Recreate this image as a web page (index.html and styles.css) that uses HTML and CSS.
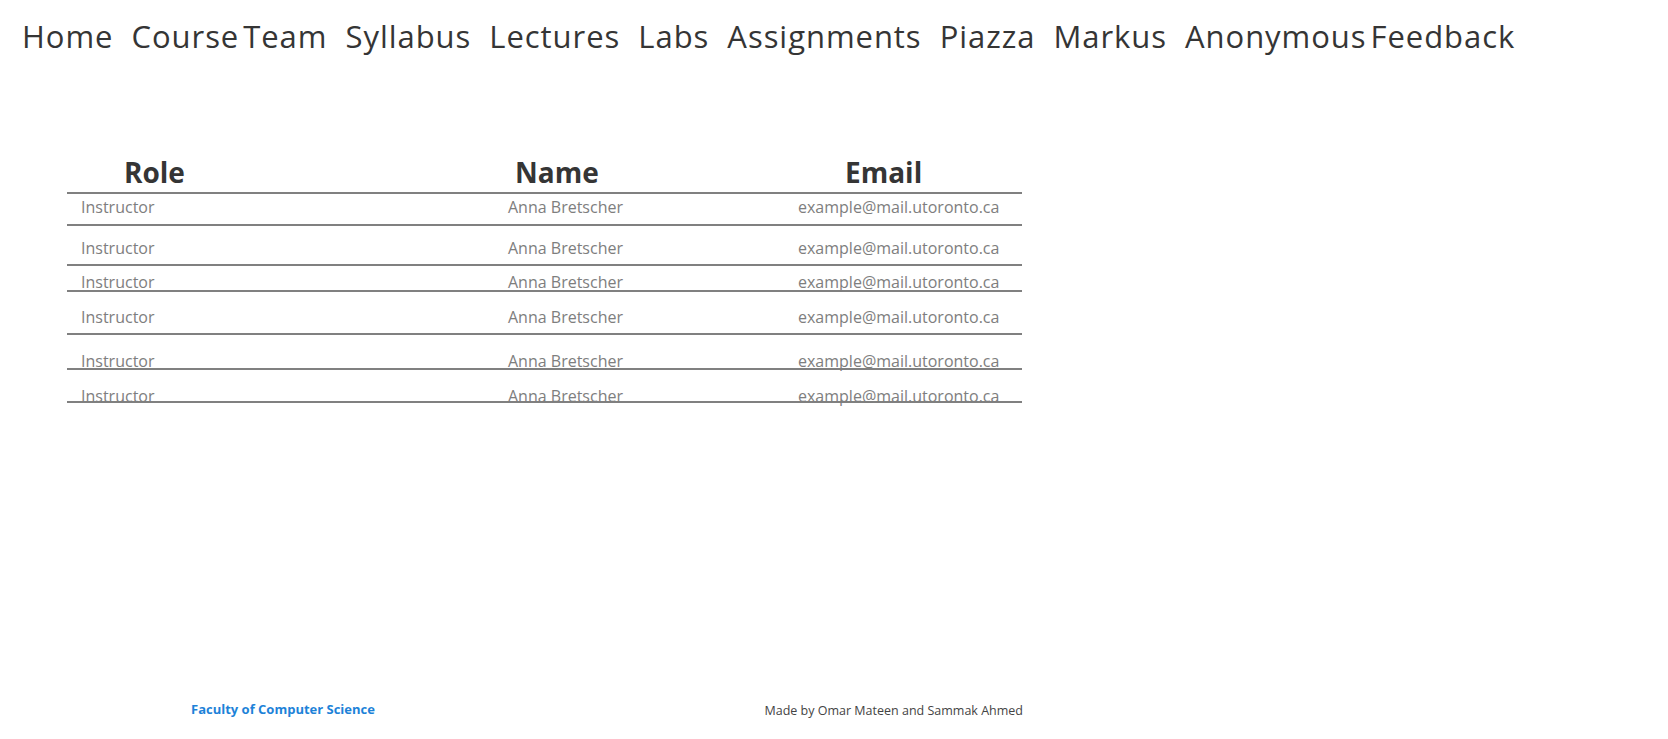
FILE: index.html
```html
<!DOCTYPE html>
<html lang="en">
<head>
<meta charset="utf-8">
<title>Course Team</title>
<link rel="stylesheet" href="styles.css">
</head>
<body>
<nav class="nav">
  <a class="nav-link" href="#">Home</a>
  <a class="nav-link" href="#">Course Team</a>
  <a class="nav-link" href="#">Syllabus</a>
  <a class="nav-link" href="#">Lectures</a>
  <a class="nav-link" href="#">Labs</a>
  <a class="nav-link" href="#">Assignments</a>
  <a class="nav-link" href="#">Piazza</a>
  <a class="nav-link" href="#">Markus</a>
  <a class="nav-link" href="#">Anonymous Feedback</a>
</nav>
<main class="team">
  <div class="row head">
    <div class="cell c1">Role</div>
    <div class="cell c2">Name</div>
    <div class="cell c3">Email</div>
  </div>
  <div class="row r1">
    <div class="cell c1">Instructor</div>
    <div class="cell c2">Anna Bretscher</div>
    <div class="cell c3">example@mail.utoronto.ca</div>
  </div>
  <div class="row r2">
    <div class="cell c1">Instructor</div>
    <div class="cell c2">Anna Bretscher</div>
    <div class="cell c3">example@mail.utoronto.ca</div>
  </div>
  <div class="row r3">
    <div class="cell c1">Instructor</div>
    <div class="cell c2">Anna Bretscher</div>
    <div class="cell c3">example@mail.utoronto.ca</div>
  </div>
  <div class="row r4">
    <div class="cell c1">Instructor</div>
    <div class="cell c2">Anna Bretscher</div>
    <div class="cell c3">example@mail.utoronto.ca</div>
  </div>
  <div class="row r5">
    <div class="cell c1">Instructor</div>
    <div class="cell c2">Anna Bretscher</div>
    <div class="cell c3">example@mail.utoronto.ca</div>
  </div>
  <div class="row r6">
    <div class="cell c1">Instructor</div>
    <div class="cell c2">Anna Bretscher</div>
    <div class="cell c3">example@mail.utoronto.ca</div>
  </div>
</main>
<footer class="footer">
  <a class="faculty" href="#">Faculty of Computer Science</a>
  <span class="credits">Made by Omar Mateen and Sammak Ahmed</span>
</footer>
</body>
</html>
```

FILE: styles.css
```css
html, body {
  margin: 0;
  padding: 0;
  background: #ffffff;
}

body {
  font-family: "Open Sans", "Noto Sans", sans-serif;
  color: #353535;
  width: 1668px;
  height: 739px;
  overflow: hidden;
}

.nav {
  display: flex;
  gap: 19px;
  padding: 16px 0 0 22px;
  height: 40px;
}

.nav-link {
  font-size: 31px;
  letter-spacing: 0.95px;
  word-spacing: -5px;
  margin-right: -0.95px;
  line-height: 40px;
  color: #353535;
  text-decoration: none;
  white-space: nowrap;
}

.team {
  margin: 99px 0 0 67px;
  width: 955px;
}

.row {
  display: grid;
  grid-template-columns: 400px 300px 255px;
  border-bottom: 2px solid #808080;
  box-sizing: content-box;
}

.head {
  font-weight: 700;
  font-size: 28px;
  line-height: 34px;
  color: #353535;
  padding-bottom: 3px;
}

.head .c1 { padding-left: 57px; }
.head .c2 { padding-left: 48px; }
.head .c3 { padding-left: 78px; }

.r1, .r2, .r3, .r4, .r5, .r6 {
  font-size: 16px;
  line-height: 16px;
  color: #7e7e7e;
}

.r1 .c1, .r2 .c1, .r3 .c1, .r4 .c1, .r5 .c1, .r6 .c1 { padding-left: 14px; }
.r1 .c2, .r2 .c2, .r3 .c2, .r4 .c2, .r5 .c2, .r6 .c2 { padding-left: 41px; }
.r1 .c3, .r2 .c3, .r3 .c3, .r4 .c3, .r5 .c3, .r6 .c3 { padding-left: 31px; }

.cell {
  white-space: nowrap;
}

.r1 { height: 25px; padding-top: 5px; }
.r2 { height: 24px; padding-top: 14px; }
.r3 { height: 16px; padding-top: 8px; }
.r4 { height: 24px; padding-top: 17px; }
.r5 { height: 15px; padding-top: 18px; }
.r6 { height: 13px; padding-top: 18px; }

.footer {
  display: flex;
  justify-content: space-between;
  align-items: flex-end;
  width: 832px;
  margin: 296px 0 0 191px;
}

.faculty {
  font-size: 13px;
  font-weight: 700;
  line-height: 20px;
  margin-bottom: 2px;
  color: #1d82d8;
  text-decoration: none;
}

.credits {
  font-size: 12.5px;
  line-height: 20px;
  color: #444444;
}
```
